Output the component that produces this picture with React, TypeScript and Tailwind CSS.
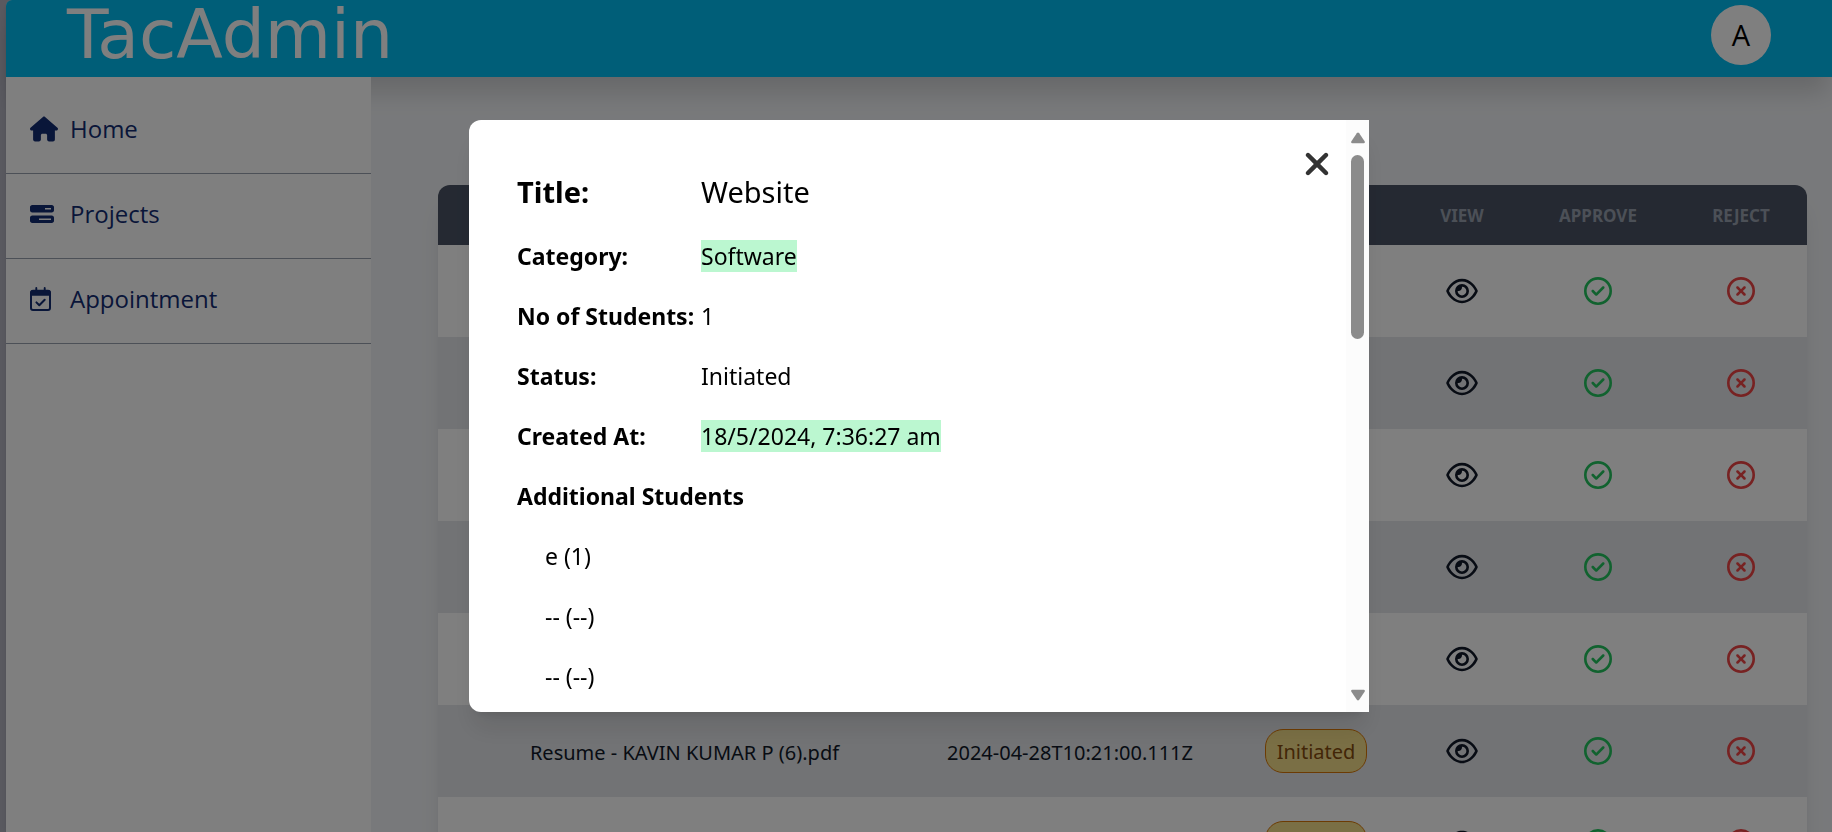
import React from "react";
import {
  FaBarsProgress,
  FaHouse,
  FaRegCircleCheck,
  FaRegCircleXmark,
  FaRegEye,
  FaXmark,
} from "react-icons/fa6";

function CalendarIcon() {
  return (
    <svg viewBox="0 0 21 24" className="h-6 w-[21px]" fill="none" stroke="currentColor" strokeLinecap="round" strokeLinejoin="round">
      <rect x="1" y="4" width="19" height="19" rx="2" strokeWidth="2" />
      <path d="M1 5.5a2 2 0 0 1 2-2h15a2 2 0 0 1 2 2V8H1Z" fill="currentColor" strokeWidth="1.6" />
      <path d="M6.3 1v3M14.7 1v3" strokeWidth="1.9" />
      <path d="M6.4 15.4l2.9 2.9 5.4-5.6" strokeWidth="2" />
    </svg>
  );
}

const navItems = [
  { label: "Home", icon: <FaHouse className="size-7" /> },
  { label: "Projects", icon: <FaBarsProgress className="size-6" /> },
  { label: "Appointment", icon: <CalendarIcon /> },
];

const resume = {
  name: "Resume - KAVIN KUMAR P (6).pdf",
  date: "2024-04-28T10:21:00.111Z",
  status: "Initiated",
};

const pending = { name: "", date: "", status: "" };

const files = [pending, pending, pending, pending, pending, resume, resume];

const details = [
  { label: "Category:", value: "Software", marked: true },
  { label: "No of Students:", value: "1", marked: false },
  { label: "Status:", value: "Initiated", marked: false },
  { label: "Created At:", value: "18/5/2024, 7:36:27 am", marked: true },
];

const students = ["e (1)", "-- (--)", "-- (--)"];

function Header() {
  return (
    <header className="relative z-10 flex h-[77px] shrink-0 items-start justify-between rounded-tl-md bg-[#00bcf0] px-[61px] shadow-[0_20px_25px_-5px_rgba(0,0,0,0.15)]">
      <h1 className="font-['DejaVu_Sans'] text-[68px] leading-[70px] text-white">TacAdmin</h1>
      <button
        type="button"
        className="mt-[5px] flex size-[60px] items-center justify-center rounded-full bg-white font-['Open_Sans'] text-[29px] text-black"
      >
        A
      </button>
    </header>
  );
}

function Sidebar() {
  return (
    <nav className="relative z-20 w-[365px] shrink-0 bg-white pt-3">
      <ul>
        {navItems.map((item) => (
          <li key={item.label} className="border-b border-gray-400">
            <a
              href="#"
              className="flex h-21 items-center gap-3 px-6 pb-1 font-['Open_Sans'] text-[24px] text-[#132c72]"
            >
              <span className="flex w-7">{item.icon}</span>
              {item.label}
            </a>
          </li>
        ))}
      </ul>
    </nav>
  );
}

function FileTable() {
  return (
    <div className="overflow-hidden rounded-t-xl shadow-xl">
      <table className="w-full table-fixed text-center text-[20px] text-gray-900">
        <colgroup>
          <col />
          <col className="w-[318px]" />
          <col className="w-[174px]" />
          <col className="w-[118px]" />
          <col className="w-[154px]" />
          <col className="w-[132px]" />
        </colgroup>
        <thead className="bg-[#4a5365] text-[17px] text-gray-400 uppercase">
          <tr className="h-[60px]">
            <th className="pt-0.5 pl-5">Name</th>
            <th className="pt-0.5">Date</th>
            <th className="pt-0.5">Status</th>
            <th className="pt-0.5">View</th>
            <th className="pt-0.5">Approve</th>
            <th className="pt-0.5">Reject</th>
          </tr>
        </thead>
        <tbody>
          {files.map((file, i) => (
            <tr key={i} className="h-[92px] bg-white even:bg-[#e5e7eb]">
              <td className="pt-1 pl-5">{file.name}</td>
              <td className="pt-1">{file.date}</td>
              <td>
                {file.status && (
                  <span className="inline-flex h-11 items-center rounded-[18px] border border-[#d97706] bg-[#f5df8a] px-[11px] pt-0.5 text-[#854d0e]">
                    {file.status}
                  </span>
                )}
              </td>
              <td>
                <button type="button" aria-label="View" className="block w-full">
                  <FaRegEye className="mx-auto h-7 w-8" />
                </button>
              </td>
              <td>
                <button type="button" aria-label="Approve" className="block w-full text-[#22c55e]">
                  <FaRegCircleCheck className="mx-auto size-7" />
                </button>
              </td>
              <td>
                <button type="button" aria-label="Reject" className="block w-full text-[#ef4444]">
                  <FaRegCircleXmark className="mx-auto size-7" />
                </button>
              </td>
            </tr>
          ))}
        </tbody>
      </table>
    </div>
  );
}

function ScrollTrack() {
  return (
    <div className="flex w-[23px] shrink-0 flex-col items-center bg-[#fcfcfc] pt-3 pb-[11px]">
      <svg viewBox="0 0 14 12" className="h-3 w-[14px] fill-[#8b8b8b]">
        <path d="M5.8 1.2 Q7 -.4 8.2 1.2 L13.6 9.3 Q14.4 11.2 12.6 11.2 H1.4 Q-.4 11.2 .4 9.3Z" />
      </svg>
      <div className="mt-[11px] h-[184px] w-[13px] rounded-full bg-[#8b8b8b]" />
      <svg viewBox="0 0 14 12" className="mt-auto h-3 w-[14px] rotate-180 fill-[#8b8b8b]">
        <path d="M5.8 1.2 Q7 -.4 8.2 1.2 L13.6 9.3 Q14.4 11.2 12.6 11.2 H1.4 Q-.4 11.2 .4 9.3Z" />
      </svg>
    </div>
  );
}

function DetailsDialog() {
  return (
    <div className="fixed inset-0 z-30 flex items-center justify-center bg-black/50 pl-1.5">
      <div
        role="dialog"
        aria-modal="true"
        className="flex h-[592px] w-full max-w-[900px] overflow-hidden rounded-l-xl bg-white text-[23px] leading-8 text-black shadow-xl"
      >
        <div className="relative flex-1 px-12 pt-12">
          <button
            type="button"
            aria-label="Close"
            className="absolute top-[26px] right-[11px] text-[#333333]"
          >
            <FaXmark className="size-9" />
          </button>
          <h2 className="flex h-12 items-center text-[29px]">
            <span className="w-[184px] font-bold">Title:</span>
            <span>Website</span>
          </h2>
          <dl className="mt-6 flex flex-col gap-7">
            {details.map((row) => (
              <div key={row.label} className="flex">
                <dt className="w-[184px] shrink-0 font-bold whitespace-nowrap">{row.label}</dt>
                <dd className={row.marked ? "bg-[#bbf7d0]" : ""}>{row.value}</dd>
              </div>
            ))}
          </dl>
          <h3 className="mt-7 font-bold">Additional Students</h3>
          <ul className="mt-7 flex flex-col gap-7 pl-7">
            {students.map((student, i) => (
              <li key={i}>{student}</li>
            ))}
          </ul>
        </div>
        <ScrollTrack />
      </div>
    </div>
  );
}

export default function App() {
  return (
    <div className="h-screen overflow-hidden bg-[#b3b3bf] pl-1.5 font-['Noto_Sans',sans-serif]">
      <div className="flex h-full flex-col rounded-l-md bg-[#f1f3f6] shadow-md">
        <Header />
        <div className="flex min-h-0 flex-1">
          <Sidebar />
          <main className="min-w-0 flex-1 pt-27 pr-[25px] pl-[67px]">
            <FileTable />
          </main>
        </div>
      </div>
      <DetailsDialog />
    </div>
  );
}
